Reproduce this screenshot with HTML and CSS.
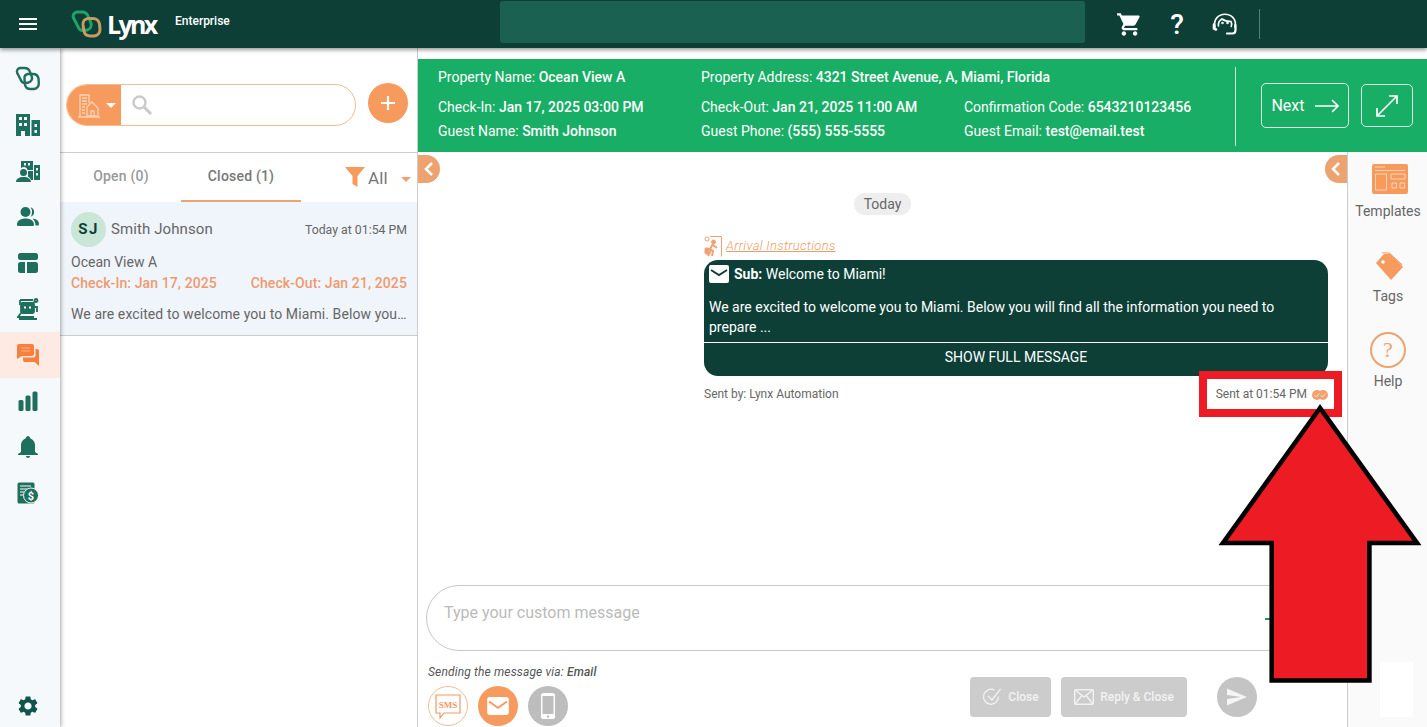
FILE: index.html
```html
<!DOCTYPE html>
<html lang="en">
<head>
  <meta charset="UTF-8" />
  <title>Lynx Enterprise - Messages</title>
  <link rel="stylesheet" href="styles.css">
</head>
<body>
  <header class="topbar">
    <div class="menu-btn">
      <svg width="24" height="24" viewBox="0 0 24 24" fill="#fff"><path d="M3 18h18v-2H3v2zm0-5h18v-2H3v2zm0-7v2h18V6H3z"/></svg>
    </div>
    <div class="brand">
      <svg class="brand-rings" width="31" height="28" viewBox="0 0 31 28" fill="none" stroke-width="3">
        <path d="M6 2h5c3 0 5 1.500 6 4l3 7c.8 3-.5 6-4 7l-3 .5c-3 .3-5-1-6-4L2.500 8C1.500 5 3 2.500 6 2z" stroke="#1fa463"/>
        <path d="M17 8.500h5c3.500 0 6 2.500 6.500 5.500l.5 5c.2 3.500-2 6.500-5.500 7h-4c-3.500 0-6-2-6.500-5L12 15c-.5-3.500 1.500-6 5-6.500z" stroke="#c99a62"/>
      </svg>
      <span class="brand-name">Lynx</span>
      <span class="brand-tier">Enterprise</span>
    </div>
    <div class="top-search"></div>
    <div class="top-icons">
      <span class="top-icon">
        <svg width="27" height="27" viewBox="0 0 24 24" fill="#fff"><path d="M7 18c-1.100 0-1.990.9-1.990 2S5.900 22 7 22s2-.9 2-2-.9-2-2-2zM1 2v2h2l3.600 7.590-1.350 2.450c-.16.28-.25.61-.25.96 0 1.100.9 2 2 2h12v-2H7.420c-.14 0-.25-.11-.25-.25l.03-.12.9-1.630h7.450c.75 0 1.410-.41 1.750-1.030l3.580-6.490c.08-.14.12-.31.12-.48 0-.55-.45-1-1-1H5.210l-.94-2H1zm16 16c-1.100 0-1.990.9-1.990 2s.89 2 1.990 2 2-.9 2-2-.9-2-2-2z"/></svg>
      </span>
      <span class="top-icon top-help">?</span>
      <span class="top-icon">
        <svg width="26" height="22" viewBox="0 0 26 22" fill="none" stroke="#fff" stroke-width="1.600" stroke-linecap="round">
          <path d="M3 14C1 6 7 1.200 13 1.200S25 6 23 14"/>
          <path d="M6.500 13c-.5-3 1-5.500 3.500-7 2 1.500 6 2.500 9 2.500.8 1.500.8 3.500.2 5"/>
          <path d="M2 11.500v4l2 1" stroke-width="2.600"/>
          <path d="M23.500 12v5c0 2-1 3.500-3 3.500H15" stroke-width="2.200"/>
          <circle cx="10.500" cy="10" r=".5"/><circle cx="15.500" cy="10" r=".5"/>
        </svg>
      </span>
      <span class="top-divider"></span>
    </div>
  </header>

  <div class="layout">
    <nav class="sidenav">
      <a class="nav-item">
        <svg width="26" height="26" viewBox="0 0 26 26" fill="none" stroke="#1f6f5f" stroke-width="2.400">
          <path d="M5 2h4.500c2.500 0 4.500 1.300 5.300 3.500l2 5c.8 2.700-.5 5.300-3.300 6l-2.500.5c-2.500.3-4.500-1-5.300-3.200L2.200 7C1.400 4.500 2.500 2.500 5 2z"/>
          <path d="M13 8h5c3 0 5 2 5.500 4.500l.3 4.500c.2 3-1.800 5.500-4.800 6h-3.500c-3 0-5-1.700-5.500-4.300L9.500 13c-.4-3 1-4.500 3.500-5z"/>
        </svg>
      </a>
      <a class="nav-item">
        <svg width="26" height="26" viewBox="0 0 26 26" fill="#1f6f5f" fill-rule="evenodd"><path d="M1 2h14v22H10v-5H6v5H1zM4 5v3h3V5zm5 0v3h3V5zM4 11v3h3v-3zm5 0v3h3v-3zM16.500 8H25v16h-8.500zm3 4v3h2.500v-3zm0 6v3h2.500v-3z"/></svg>
      </a>
      <a class="nav-item">
        <svg width="26" height="26" viewBox="0 0 26 26" fill="#1f6f5f" fill-rule="evenodd"><path d="M6 3h12v9h-5.500c-.5-2-2-3-3.500-3-1 0-2 .3-3 1zM9 5v2.500h2V5zm4 0v2.500h2V5zM19 7h6v15h-6zm2 3v2.500h2V10zm0 5v2.500h2V15zM8.500 11a3.500 3.500 0 1 1 0 7 3.500 3.500 0 0 1 0-7zM1 24c0-3 3-5 7.500-5s7.500 2 7.500 5z"/><path d="M13 13h5v9h-2c-.5-1.500-1.500-2.500-3-3.500z"/></svg>
      </a>
      <a class="nav-item">
        <svg width="24" height="24" viewBox="0 0 24 24" fill="#1f6f5f"><circle cx="9.500" cy="7" r="5"/><path d="M14.500 2.200a5 5 0 0 1 0 9.600A7 7 0 0 0 16 7a7 7 0 0 0-1.500-4.800zM1 19.500C1 15.500 5 13.500 9.500 13.500S18 15.500 18 19.500c0 1-.6 1.500-1.500 1.500h-14C1.600 21 1 20.500 1 19.500zM16.500 13.500c3.500.2 6.500 2 6.500 5.500 0 1-.5 1.500-1.500 1.500h-2c0-3-1-5-3-7z"/></svg>
      </a>
      <a class="nav-item">
        <svg width="22" height="22" viewBox="0 0 22 22" fill="#1f6f5f"><rect x="1" y="1" width="20" height="7" rx="2.500"/><path d="M3.500 10H8v11H3.500A2.500 2.500 0 0 1 1 18.500v-6A2.500 2.500 0 0 1 3.500 10zM10 10h8.500a2.500 2.500 0 0 1 2.500 2.500v6a2.500 2.500 0 0 1-2.500 2.500H10z"/></svg>
      </a>
      <a class="nav-item">
        <svg width="22" height="22" viewBox="0 0 22 22" fill="none" stroke="#1f6f5f" stroke-width="1.800"><path d="M3 2h13M3 2v5M19 3l-3 2"/><rect x="4" y="5" width="13" height="10" rx="1.500" fill="#1f6f5f"/><path d="M4 15l-3 4h16M2 21h18"/><circle cx="19" cy="2.500" r="1.500"/><path d="M17 9h3v5" /><rect x="7" y="8.500" width="2" height="2" fill="#fff" stroke="none"/><rect x="12" y="8.500" width="2" height="2" fill="#fff" stroke="none"/></svg>
      </a>
      <a class="nav-item nav-active">
        <svg width="24" height="24" viewBox="0 0 24 24" fill="#f97f3e"><path d="M3 1h13a2 2 0 0 1 2 2v8a2 2 0 0 1-2 2H6l-5 3V3a2 2 0 0 1 2-2z"/><path d="M19.500 6H21a2 2 0 0 1 2 2v15l-4.500-4H9a2 2 0 0 1-2-2v-2.500h10a2.500 2.500 0 0 0 2.500-2.500z"/><path d="M5 5h9M5 8h9" stroke="#fbb48a" stroke-width="1"/></svg>
      </a>
      <a class="nav-item">
        <svg width="20" height="20" viewBox="0 0 20 20" fill="#1f6f5f"><rect x="0.500" y="9" width="5" height="11" rx="1.500"/><rect x="7.500" y="4.500" width="5" height="15.500" rx="1.500"/><rect x="14.500" y="0.500" width="5" height="19.500" rx="1.500"/></svg>
      </a>
      <a class="nav-item">
        <svg width="20" height="22" viewBox="0 0 20 22" fill="#1f6f5f"><path d="M10 0c1 0 2 1 2.500 2.500C15 3.500 17 6 17 9v7l3 2v1H0v-1l3-2V9c0-3 2-5.500 4.500-6.500C8 1 9 0 10 0zM8 20h4c0 1-1 2-2 2s-2-1-2-2z"/></svg>
      </a>
      <a class="nav-item">
        <svg width="22" height="22" viewBox="0 0 22 22"><rect x="0.500" y="0.500" width="17" height="21" rx="1.500" fill="#1f6f5f"/><path d="M3 4h11M3 7h7M3 10h4M3 13h3" stroke="#fff" stroke-width="1.200"/><circle cx="14" cy="13.500" r="7.500" fill="#1f6f5f" stroke="#f6f9fb" stroke-width="1"/><text x="14" y="17.500" class="nav-dollar" text-anchor="middle">$</text></svg>
      </a>
      <a class="nav-item nav-settings">
        <svg width="24" height="24" viewBox="0 0 24 24" fill="#10544c"><path d="M19.140 12.940c.04-.3.06-.61.06-.94 0-.32-.02-.64-.07-.94l2.030-1.580c.18-.14.23-.41.12-.61l-1.920-3.320c-.12-.22-.37-.29-.59-.22l-2.390.96c-.5-.38-1.030-.7-1.620-.94l-.36-2.540c-.04-.24-.24-.41-.48-.41h-3.840c-.24 0-.43.17-.47.41l-.36 2.540c-.59.24-1.130.57-1.620.94l-2.390-.96c-.22-.08-.47 0-.59.22L2.740 8.870c-.12.21-.08.47.12.61l2.030 1.580c-.05.3-.09.63-.09.94s.02.64.07.94l-2.030 1.580c-.18.14-.23.41-.12.61l1.920 3.320c.12.22.37.29.59.22l2.390-.96c.5.38 1.030.7 1.620.94l.36 2.540c.05.24.24.41.48.41h3.840c.24 0 .44-.17.47-.41l.36-2.540c.59-.24 1.130-.56 1.620-.94l2.390.96c.22.08.47 0 .59-.22l1.920-3.320c.12-.22.07-.47-.12-.61l-2.010-1.580zM12 15.600c-1.980 0-3.600-1.620-3.600-3.600s1.620-3.600 3.600-3.600 3.600 1.620 3.600 3.600-1.620 3.600-3.600 3.600z"/></svg>
      </a>
    </nav>

    <section class="inbox">
      <div class="inbox-search">
        <div class="search-pill">
          <div class="search-scope">
            <svg width="22" height="25" viewBox="0 0 22 25" fill="none" stroke="#fbd3b5" stroke-width="1.300"><path d="M2 23V2h9v8M0 24h22"/><path d="M4 5h5M4 8h5M4 11h5M4 14h3M4 17h3M4 20h3"/><path d="M9 23V14l5-5 6 6v8zM13 23v-5h3v5"/></svg>
            <span class="scope-caret"></span>
          </div>
          <svg class="search-glass" width="22" height="22" viewBox="0 0 22 22" fill="none" stroke="#c9c9c9" stroke-width="2.400"><circle cx="8.500" cy="8.500" r="6"/><path d="M13 13l7 7" stroke-width="3"/></svg>
        </div>
        <div class="add-btn">
          <svg width="20" height="20" viewBox="0 0 20 20" stroke="#fff" stroke-width="2.200"><path d="M10 3v14M3 10h14"/></svg>
        </div>
      </div>
      <div class="tabs">
        <span class="tab">Open (0)</span>
        <span class="tab tab-active">Closed (1)</span>
        <span class="filter">
          <svg width="20" height="20" viewBox="0 0 20 20" fill="#f79a5d"><path d="M0 0h20l-7.500 9v11l-5-3V9z"/></svg>
          <span class="filter-label">All</span>
          <span class="filter-caret"></span>
        </span>
      </div>
      <div class="thread">
        <div class="thread-head">
          <span class="avatar">SJ</span>
          <span class="thread-name">Smith Johnson</span>
          <span class="thread-time">Today at 01:54 PM</span>
        </div>
        <div class="thread-prop">Ocean View A</div>
        <div class="thread-dates">
          <span>Check-In: Jan 17, 2025</span>
          <span>Check-Out: Jan 21, 2025</span>
        </div>
        <div class="thread-preview">We are excited to welcome you to Miami. Below you…</div>
      </div>
    </section>

    <main class="convo">
      <div class="banner">
        <div class="banner-info">
          <div class="banner-row banner-row-first">
            <span class="banner-cell">Property Name: <b>Ocean View A</b></span>
            <span class="banner-cell banner-wide">Property Address: <b>4321 Street Avenue, A, Miami, Florida</b></span>
          </div>
          <div class="banner-row">
            <span class="banner-cell">Check-In: <b>Jan 17, 2025 03:00 PM</b></span>
            <span class="banner-cell">Check-Out: <b>Jan 21, 2025 11:00 AM</b></span>
            <span class="banner-cell banner-wide">Confirmation Code: <b>6543210123456</b></span>
          </div>
          <div class="banner-row">
            <span class="banner-cell">Guest Name: <b>Smith Johnson</b></span>
            <span class="banner-cell">Guest Phone: <b>(555) 555-5555</b></span>
            <span class="banner-cell banner-wide">Guest Email: <b>test@email.test</b></span>
          </div>
        </div>
        <div class="banner-actions">
          <span class="next-btn">Next
            <svg width="24" height="14" viewBox="0 0 24 14" fill="none" stroke="#fff" stroke-width="1.600"><path d="M0 7h23M17 1l6 6-6 6"/></svg>
          </span>
          <span class="expand-btn">
            <svg width="22" height="22" viewBox="0 0 22 22" fill="none" stroke="#fff" stroke-width="1.700"><path d="M1 21L21 1M13 1h8v8M1 13v8h8"/></svg>
          </span>
        </div>
      </div>

      <div class="convo-body">
        <div class="chat">
          <span class="collapse collapse-left">
            <svg width="10" height="14" viewBox="0 0 10 14" fill="none" stroke="#fff" stroke-width="2.500"><path d="M8 1L2 7l6 6"/></svg>
          </span>
          <span class="collapse collapse-right">
            <svg width="10" height="14" viewBox="0 0 10 14" fill="none" stroke="#fff" stroke-width="2.500"><path d="M8 1L2 7l6 6"/></svg>
          </span>

          <div class="messages">
            <span class="day-pill">Today</span>
            <div class="message">
              <div class="msg-tag">
                <svg width="18" height="21" viewBox="0 0 18 21" fill="none" stroke="#f2a071" stroke-width="1"><path d="M6 .5h11.500v20"/><circle cx="3" cy="3" r="2"/><circle cx="9.500" cy="6" r="2" fill="#f2a071"/><path d="M9 8l-3 5 3 2-1 5M9 9l4 3M7 14l-3 6" stroke-width="2"/><rect x="1" y="12" width="4" height="6" rx="1" fill="#f2a071"/></svg>
                <span class="msg-tag-link">Arrival Instructions</span>
              </div>
              <div class="bubble">
                <div class="bubble-sub">
                  <svg width="20" height="18" viewBox="0 0 20 18"><rect width="20" height="18" rx="2" fill="#fff"/><path d="M2 5l8 5 8-5" fill="none" stroke="#0d3f37" stroke-width="2"/></svg>
                  <span><b>Sub:</b> Welcome to Miami!</span>
                </div>
                <p class="bubble-text">We are excited to welcome you to Miami. Below you will find all the information you need to prepare ...</p>
                <div class="bubble-more">SHOW FULL MESSAGE</div>
              </div>
              <div class="msg-meta">
                <span>Sent by: Lynx Automation</span>
                <span class="msg-sent">Sent at 01:54 PM
                  <svg class="sent-check" width="16" height="10" viewBox="0 0 16 10"><circle cx="5" cy="5" r="5" fill="#f0a26f"/><circle cx="11" cy="5" r="5" fill="#f0a26f"/><path d="M2.500 5l2 2 3-3.500M8.500 5l2 2 3-3.500" fill="none" stroke="#fbe0cc" stroke-width="1"/></svg>
                </span>
              </div>
            </div>
          </div>

          <div class="composer">
            <div class="composer-box">
              <span class="composer-hint">Type your custom message</span>
              <span class="composer-plus"></span>
            </div>
            <div class="composer-foot">
              <div class="channels">
                <div class="channel-note">Sending the message via: <b>Email</b></div>
                <div class="channel-list">
                  <span class="channel channel-sms">
                    <svg width="30" height="30" viewBox="0 0 30 30" fill="none" stroke="#ef9a63" stroke-width="1.200"><path d="M3 4h24v18H11l-4 5v-5H3z"/><text x="15" y="17" class="sms-text" text-anchor="middle">SMS</text></svg>
                  </span>
                  <span class="channel channel-mail">
                    <svg width="22" height="18" viewBox="0 0 24 20"><rect width="24" height="20" rx="3" fill="#fff"/><path d="M2 5l10 7 10-7" fill="none" stroke="#f79a5d" stroke-width="2"/></svg>
                  </span>
                  <span class="channel channel-phone">
                    <svg width="14" height="26" viewBox="0 0 14 26"><rect width="14" height="26" rx="2.500" fill="#fff"/><rect x="1.500" y="3" width="11" height="18" fill="#bdbdbd"/><circle cx="7" cy="23.500" r="1.200" fill="#bdbdbd"/></svg>
                  </span>
                </div>
              </div>
              <div class="composer-actions">
                <span class="action-btn action-close">
                  <svg width="20" height="20" viewBox="0 0 20 20" fill="none" stroke="#f2f2f2" stroke-width="1.300"><path d="M16.500 9.500a7.500 7.500 0 1 1-4-6.400"/><path d="M6 9l4 4 8.500-11"/></svg>
                  Close
                </span>
                <span class="action-btn action-reply">
                  <svg width="20" height="16" viewBox="0 0 20 16" fill="none" stroke="#f2f2f2" stroke-width="1.400"><rect x=".7" y=".7" width="18.600" height="14.600" rx="1"/><path d="M1 1l9 7 9-7M1 15l6.500-8M19 15l-6.500-8"/></svg>
                  Reply &amp; Close
                </span>
                <span class="send-btn">
                  <svg width="20" height="18" viewBox="2 3 21 18" fill="#f5f5f5"><path d="M2.010 21L23 12 2.010 3 2 10l15 2-15 2z"/></svg>
                </span>
              </div>
            </div>
          </div>
        </div>

        <aside class="rail">
          <div class="rail-item rail-item-first">
            <svg class="rail-templates" width="36" height="30" viewBox="0 0 36 30"><rect width="36" height="30" rx="2" fill="#f79a5d"/><path d="M3 3h10M3 6.500h30M3.500 10h11v16h-11zM19 10h14v5H19zM20 19h4.500v5H20zM28 19h4.500v5H28z" fill="none" stroke="#fbd3b5" stroke-width="1"/></svg>
            <span class="rail-label">Templates</span>
          </div>
          <div class="rail-item">
            <svg class="rail-tag" width="30" height="30" viewBox="0 0 30 30"><path d="M1 11L9 2h6l13 13-12 13z" fill="#f79a5d"/><path d="M7 1h7l13 12" fill="none" stroke="#f79a5d" stroke-width="1.200"/><circle cx="8" cy="10" r="1.800" fill="#fff"/></svg>
            <span class="rail-label">Tags</span>
          </div>
          <div class="rail-item rail-item-help">
            <span class="rail-help">?</span>
            <span class="rail-label">Help</span>
          </div>
        </aside>
      </div>
    </main>
  </div>

  <!-- screenshot markup drawn on top of the page -->
  <div class="callout-box"></div>
  <svg class="callout-arrow" width="1427" height="727" viewBox="0 0 1427 727">
    <polygon points="1320,408 1223,543 1271.700,543 1271.700,680.500 1369.400,680.500 1369.400,543 1417,543" fill="#ed1c24" stroke="#000" stroke-width="4.600"/>
  </svg>
  <div class="corner-patch"></div>
</body>
</html>
```

FILE: styles.css
```css
* {
  margin: 0;
  padding: 0;
  box-sizing: border-box;
}

html, body {
  height: 100%;
  overflow: hidden;
}

body {
  font-family: Roboto, "Liberation Sans", sans-serif;
  font-size: 14px;
  color: #555;
  background: #fff;
  display: flex;
  flex-direction: column;
}

/* top bar */
.topbar {
  flex: 0 0 48px;
  height: 48px;
  background: #0d3f37;
  display: flex;
  align-items: center;
  box-shadow: 0 2px 4px rgba(0, 0, 0, 0.4);
  position: relative;
  z-index: 3;
}

.menu-btn {
  width: 56px;
  display: flex;
  justify-content: center;
}

.brand {
  width: 444px;
  padding-left: 15px;
  display: flex;
  align-items: center;
  color: #fff;
}

.brand-rings {
  flex: none;
}

.brand-name {
  font-family: "Open Sans", sans-serif;
  font-size: 25px;
  font-weight: 700;
  letter-spacing: -2.700px;
  margin-left: 5px;
  width: 68px;
}

.brand-tier {
  font-size: 12px;
  font-weight: 500;
  margin-top: -7px;
}

.top-search {
  width: 585px;
  height: 42px;
  margin-top: -4px;
  background: #1a6152;
  border-radius: 3px;
}

.top-icons {
  margin-left: 20px;
  display: flex;
  align-items: center;
}

.top-icon {
  width: 48px;
  display: flex;
  justify-content: center;
  color: #fff;
}

.top-help {
  font-size: 28px;
  font-weight: 500;
}

.top-divider {
  width: 1px;
  height: 30px;
  margin-left: 10px;
  background: #55807a;
}

.layout {
  flex: 1;
  display: flex;
  min-height: 0;
}

/* left nav */
.sidenav {
  flex: 0 0 60px;
  background: #f6f9fb;
  padding: 8px 0 0;
  display: flex;
  flex-direction: column;
  box-shadow: 1px 0 4px rgba(0, 0, 0, 0.35);
  position: relative;
  z-index: 2;
}

.nav-item {
  height: 46px;
  display: flex;
  align-items: center;
  justify-content: center;
  flex: none;
  padding-right: 4px;
}

.nav-active {
  background: #fdebe3;
}

.nav-settings {
  margin-top: auto;
  margin-bottom: -2px;
}

.nav-dollar {
  font-family: Roboto, sans-serif;
  font-size: 11px;
  font-weight: 700;
  fill: #fff;
}

/* conversation list */
.inbox {
  flex: 0 0 358px;
  min-width: 0;
  border-right: 1px solid #ccc;
  display: flex;
  flex-direction: column;
}

.inbox-search {
  height: 105px;
  padding: 36px 9px 0 6px;
  display: flex;
  align-items: flex-start;
  border-bottom: 1px solid #ccc;
}

.search-pill {
  width: 290px;
  height: 42px;
  display: flex;
  align-items: center;
  border: 1px solid #efbd96;
  border-radius: 21px;
  overflow: hidden;
}

.search-scope {
  width: 55px;
  height: 42px;
  margin-left: -1px;
  background: #f79a5d;
  display: flex;
  align-items: center;
  padding-left: 12px;
  gap: 6px;
  flex: none;
}

.scope-caret {
  border-left: 5px solid transparent;
  border-right: 5px solid transparent;
  border-top: 5px solid #fff;
}

.search-glass {
  margin-left: 10px;
}

.add-btn {
  width: 40px;
  height: 40px;
  margin: -1px 0 0 12px;
  border-radius: 50%;
  background: #f79a5d;
  display: flex;
  align-items: center;
  justify-content: center;
}

.tabs {
  height: 49px;
  padding-left: 1px;
  display: flex;
  font-weight: 500;
  color: #999;
  letter-spacing: .2px;
}

.tab {
  width: 120px;
  text-align: center;
  line-height: 46px;
}

.tab-active {
  color: #777;
  border-bottom: 2px solid #eda36f;
}

.filter {
  margin-left: 44px;
  padding-top: 14px;
  display: flex;
  align-items: flex-start;
  font-weight: 400;
  color: #777;
}

.filter-label {
  font-size: 17px;
  margin: 1px 0 0 3px;
}

.filter-caret {
  margin: 10px 0 0 13px;
  border-left: 5px solid transparent;
  border-right: 5px solid transparent;
  border-top: 5px solid #eda36f;
}

.thread {
  height: 134px;
  padding: 10px 10px 0 11px;
  background: #f0f5fb;
  border-bottom: 1px solid #ccc;
}

.thread-head {
  display: flex;
  align-items: center;
}

.avatar {
  width: 35px;
  height: 35px;
  border-radius: 50%;
  background: #c9e6d6;
  color: #0d3f37;
  font-size: 15px;
  font-weight: 700;
  letter-spacing: 1.500px;
  text-align: center;
  line-height: 35px;
}

.thread-name {
  margin: -2px 0 0 5px;
  font-size: 15px;
  color: #666;
  letter-spacing: .1px;
}

.thread-time {
  margin-left: auto;
  font-size: 12.300px;
  color: #666;
}

.thread-prop {
  margin-top: 7px;
  line-height: 16px;
  color: #666;
}

.thread-dates {
  margin-top: 5px;
  line-height: 16px;
  display: flex;
  justify-content: space-between;
  color: #ef9a6e;
  font-weight: 500;
  letter-spacing: .1px;
}

.thread-preview {
  margin-top: 15px;
  line-height: 16px;
  color: #666;
  letter-spacing: .09px;
  white-space: nowrap;
}

/* main conversation */
.convo {
  flex: 1;
  min-width: 0;
  padding-top: 11px;
  display: flex;
  flex-direction: column;
}

.banner {
  height: 93px;
  flex: none;
  background: #18ae65;
  color: #fff;
  padding: 8px 14px 6px 20px;
  display: flex;
}

.banner-info {
  width: 797px;
  padding-right: 20px;
}

.banner-row {
  display: flex;
  line-height: 20px;
  margin-bottom: 4px;
}

.banner-row-first {
  margin-bottom: 10px;
}

.banner-cell {
  width: 263px;
  flex: none;
  font-size: 14px;
}

.banner-wide {
  width: auto;
  white-space: nowrap;
}

.banner b {
  font-weight: 500;
}

.banner-actions {
  flex: 1;
  border-left: 1px solid #c8eeda;
  height: 79px;
  padding: 16px 0 0 25px;
  display: flex;
  align-items: flex-start;
  gap: 12px;
}

.next-btn {
  width: 88px;
  height: 45px;
  border: 1px solid #d8f3e5;
  border-radius: 5px;
  display: flex;
  align-items: center;
  justify-content: center;
  gap: 10px;
  font-size: 16px;
}

.expand-btn {
  width: 52px;
  height: 43px;
  margin-top: 1px;
  border: 1px solid #d8f3e5;
  border-radius: 5px;
  display: flex;
  align-items: center;
  justify-content: center;
}

.convo-body {
  flex: 1;
  min-height: 0;
  display: flex;
}

.chat {
  flex: 1;
  min-width: 0;
  display: flex;
  flex-direction: column;
  position: relative;
}

.collapse {
  position: absolute;
  top: 3px;
  width: 22px;
  height: 28px;
  background: #eda36f;
  display: flex;
  align-items: center;
  justify-content: center;
}

.collapse-left {
  left: 0;
  border-radius: 0 14px 14px 0;
}

.collapse-right {
  right: 0;
  border-radius: 14px 0 0 14px;
}

.messages {
  flex: 1;
  padding: 41px 19px 0 286px;
  display: flex;
  flex-direction: column;
  min-height: 0;
}

.day-pill {
  align-self: center;
  margin-left: -267px;
  width: 57px;
  height: 22px;
  background: #eee;
  border-radius: 11px;
  text-align: center;
  line-height: 22px;
  color: #666;
}

.message {
  margin-top: 21px;
}

.msg-tag {
  height: 24px;
  display: flex;
  align-items: flex-start;
  gap: 4px;
}

.msg-tag-link {
  font-size: 13px;
  font-style: italic;
  font-weight: 300;
  letter-spacing: .3px;
  line-height: 20px;
  color: #ee9c68;
  text-decoration: underline;
}

.bubble {
  height: 116px;
  background: #0d3f37;
  border-radius: 14px;
  color: #fff;
  overflow: hidden;
}

.bubble-sub {
  height: 28px;
  padding-left: 5px;
  display: flex;
  align-items: center;
  gap: 5px;
}

.bubble-sub b {
  font-weight: 700;
}

.bubble-text {
  margin-top: 9px;
  padding: 0 24px 0 5px;
  line-height: 20px;
  height: 45px;
}

.bubble-more {
  border-top: 1px solid #fff;
  height: 34px;
  line-height: 29px;
  text-align: center;
}

.msg-meta {
  margin-top: 10px;
  line-height: 16px;
  display: flex;
  justify-content: space-between;
  font-size: 12px;
  color: #666;
}

.msg-sent {
  display: flex;
  align-items: center;
  gap: 5px;
}

.sent-check {
  margin-top: 2px;
}

.composer {
  flex: none;
  padding: 0 12px 0 8px;
}

.composer-box {
  height: 66px;
  border: 1px solid #c8c8c8;
  border-radius: 33px;
  padding: 17px 17px 0;
  display: flex;
  align-items: flex-start;
  font-size: 16px;
  color: #bbb;
}

/* mostly hidden behind the arrow */
.composer-plus {
  width: 20px;
  height: 2px;
  margin: 15px 32px 0 auto;
  background: #2e8b67;
}

.composer-foot {
  height: 76px;
  display: flex;
}

.channels {
  margin-left: 2px;
  padding-top: 13px;
}

.channel-note {
  font-size: 12px;
  font-style: italic;
  letter-spacing: .15px;
  line-height: 16px;
  color: #555;
}

.channel-note b {
  font-weight: 500;
}

.channel-list {
  margin-top: 6px;
  display: flex;
  gap: 10px;
}

.channel {
  width: 40px;
  height: 40px;
  border-radius: 50%;
  display: flex;
  align-items: center;
  justify-content: center;
}

.channel-sms {
  border: 1px solid #efbd96;
}

.sms-text {
  font-family: "Liberation Serif", serif;
  font-size: 9px;
  font-weight: 700;
  fill: #ef9a63;
  stroke: none;
}

.channel-mail {
  background: #f79a5d;
}

.channel-phone {
  background: #bdbdbd;
}

.composer-actions {
  margin: 26px 78px 0 auto;
  display: flex;
  align-items: flex-start;
}

.action-btn {
  height: 40px;
  background: #ccc;
  border-radius: 4px;
  color: #f2f2f2;
  font-size: 12px;
  font-weight: 500;
  display: flex;
  align-items: center;
  justify-content: center;
  gap: 6px;
}

.action-close {
  width: 81px;
}

.action-reply {
  width: 126px;
  margin-left: 10px;
}

.send-btn {
  width: 40px;
  height: 40px;
  margin-left: 30px;
  border-radius: 50%;
  background: #c4c4c4;
  display: flex;
  align-items: center;
  justify-content: center;
}

/* right rail */
.rail {
  flex: 0 0 80px;
  background: #fafafa;
  border-left: 1px solid #ccc;
  padding: 12px 0 0;
  display: flex;
  flex-direction: column;
  align-items: center;
  gap: 28px;
}

.rail-item {
  display: flex;
  flex-direction: column;
  align-items: center;
  gap: 6px;
  color: #666;
  margin-left: 1px;
}

.rail-item-first {
  margin-bottom: 5px;
}

.rail-item-help {
  gap: 5px;
}

.rail-templates {
  margin: 0 0 3px 3px;
}

.rail-tag {
  margin-left: 4px;
}

.rail-label {
  line-height: 16px;
}

.rail-help {
  width: 36px;
  height: 36px;
  border: 2px solid #eda36f;
  border-radius: 50%;
  font-family: "Liberation Serif", serif;
  font-size: 22px;
  line-height: 32px;
  text-align: center;
  color: #eda36f;
}

/* annotation on top of the screenshot */
.callout-box {
  position: absolute;
  left: 1199px;
  top: 371px;
  width: 143px;
  height: 46px;
  border: 8px solid #ed1c24;
  z-index: 5;
}

.callout-arrow {
  position: absolute;
  left: 0;
  top: 0;
  z-index: 6;
  pointer-events: none;
}

.corner-patch {
  position: absolute;
  left: 1380px;
  top: 662px;
  width: 33px;
  height: 55px;
  background: #fff;
  z-index: 4;
}
```
